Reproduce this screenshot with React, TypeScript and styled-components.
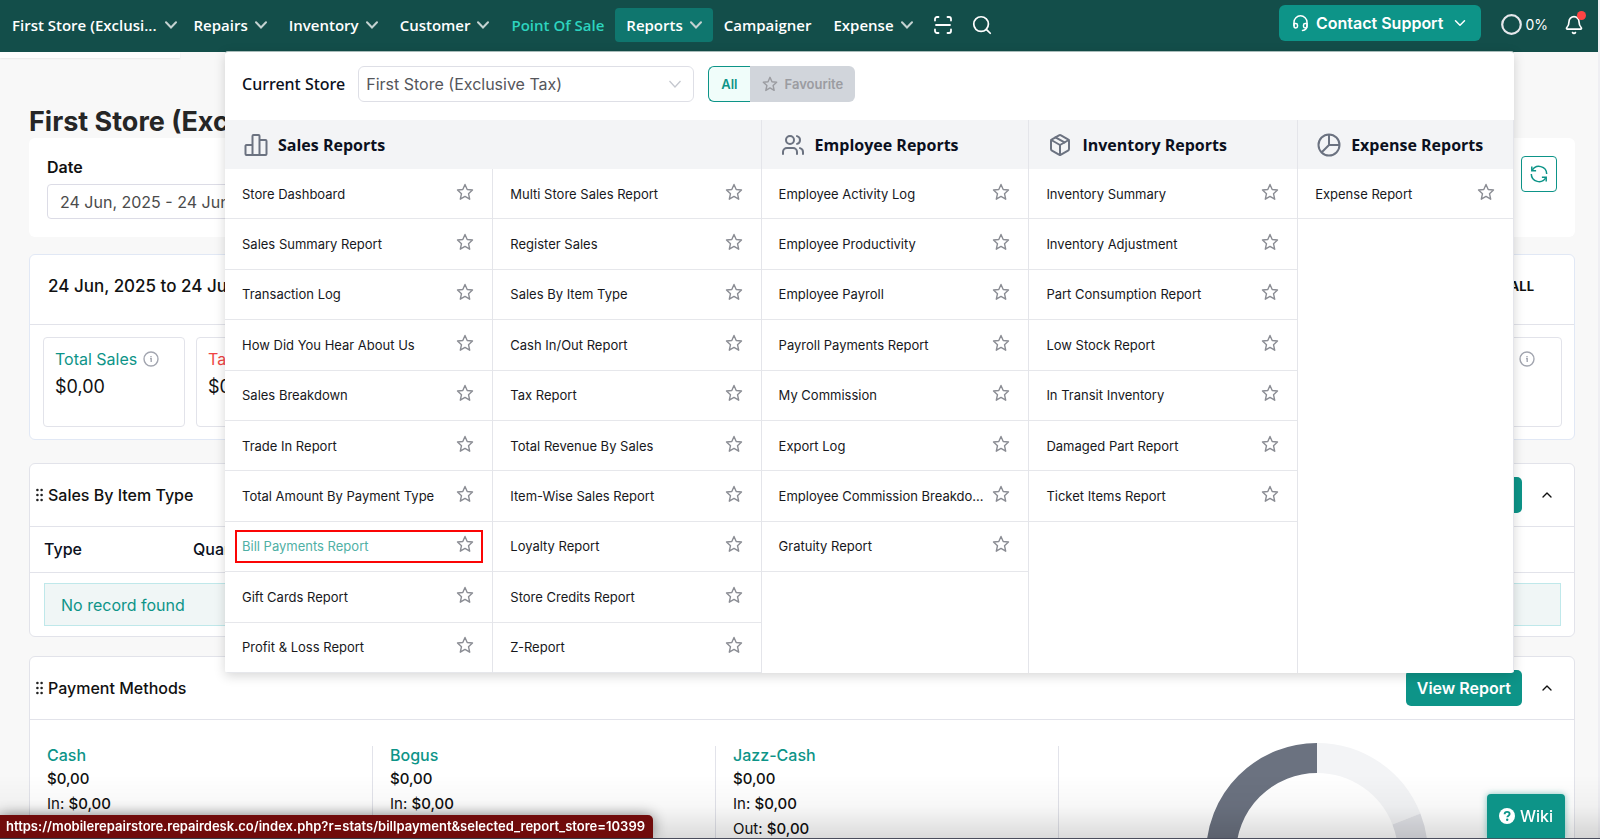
import React from "react";
import styled, { createGlobalStyle, css } from "styled-components";
import { ChevronDown, ChevronUp, Search, Bell, Users, Package } from "lucide-react";

const GlobalStyle = createGlobalStyle`
  *, *::before, *::after { box-sizing: border-box; }
  body {
    margin: 0;
    background: #f8f8f8;
    color: #111;
    font-family: Inter, "Liberation Sans", sans-serif;
    font-size: 16px;
  }
  button, input, select { font: inherit; color: inherit; }
  h1, h2, h3, p, ul, dl, dd { margin: 0; padding: 0; }
  ul { list-style: none; }
  a { color: inherit; text-decoration: none; }
`;

const Page = styled.div`
  height: 100vh;
  overflow: hidden;
  border-right: 2px solid #efeff3;
`;

/* ---------- top bar ---------- */

const TopBar = styled.header`
  position: relative;
  z-index: 5;
  display: flex;
  align-items: center;
  height: 52px;
  margin-right: -2px;
  padding: 0 16px 6px 12px;
  background: #134e4a;
  font-family: "Open Sans", "Noto Sans", sans-serif;
  font-weight: 600;
  font-size: 15px;
  color: #fff;
`;

const Nav = styled.nav`
  display: flex;
  align-items: center;
  padding-top: 4px;
`;

const barItem = css`
  display: flex;
  align-items: center;
  gap: 7px;
  height: 34px;
  padding: 0 11px;
  border: 0;
  border-radius: 4px;
  white-space: nowrap;
`;

const NavButton = styled.button<{ $active?: boolean; $first?: boolean }>`
  ${barItem}
  background: ${(p) => (p.$active ? "#0f766e" : "transparent")};
  ${(p) => p.$first && "padding: 0 6px 0 0; gap: 8px;"}
`;

const NavLink = styled.a<{ $accent?: boolean }>`
  ${barItem}
  color: ${(p) => (p.$accent ? "#2dd4bf" : "#fff")};
`;

const IconButton = styled.button`
  position: relative;
  display: flex;
  align-items: center;
  justify-content: center;
  padding: 0;
  border: 0;
  background: transparent;
  color: #fff;
`;

const NavIcons = styled.div`
  display: flex;
  gap: 19px;
  padding-left: 10px;
`;

const BarRight = styled.div`
  display: flex;
  align-items: center;
  margin-left: auto;
`;

const SupportButton = styled.button`
  display: flex;
  align-items: center;
  gap: 8px;
  height: 36px;
  margin-right: 20px;
  padding: 0 12px 0 14px;
  border: 0;
  border-radius: 6px;
  background: #0d9488;
  font-family: Inter, sans-serif;
  font-weight: 600;
  font-size: 16px;
`;

const Progress = styled.div`
  display: flex;
  align-items: center;
  gap: 3px;
  margin-right: 16px;
  padding-top: 2px;
  font-family: Inter, sans-serif;
  font-weight: 400;
  font-size: 14px;
`;

const BellButton = styled(IconButton)`
  padding-top: 4px;
`;

const Dot = styled.span`
  position: absolute;
  top: 0;
  right: -2px;
  width: 9px;
  height: 9px;
  border-radius: 50%;
  background: #ff4444;
`;

const StoreTab = styled.div`
  width: 180px;
  height: 6px;
  background: #fcfcfc;
  box-shadow: 0 1px 2px rgba(0, 0, 0, 0.07);
`;

/* ---------- dashboard ---------- */

const Main = styled.main`
  padding: 48px 23px 0 29px;
`;

const PageTitle = styled.h1`
  font-size: 27px;
  line-height: 32px;
  font-weight: 700;
  color: #262626;
`;

const FilterCard = styled.section`
  display: flex;
  justify-content: space-between;
  align-items: flex-start;
  height: 99px;
  padding: 18px 18px 0;
  border-radius: 6px;
  background: #fff;
`;

const Field = styled.label`
  display: flex;
  flex-direction: column;
  gap: 6px;
  font-size: 16px;
  line-height: 22px;
  font-weight: 600;
`;

const DateInput = styled.input`
  width: 260px;
  height: 35px;
  padding: 0 12px;
  border: 1px solid #dcdce6;
  border-radius: 4px;
  background: #fff;
  font-weight: 400;
  color: #4b4b4b;
`;

const RefreshButton = styled.button`
  display: flex;
  align-items: center;
  justify-content: center;
  width: 36px;
  height: 36px;
  padding: 0;
  border: 1px solid #0d9488;
  border-radius: 4px;
  background: #fff;
  color: #0d9488;
`;

const Card = styled.section<{ $gap: number; $tint?: boolean }>`
  margin-top: ${(p) => p.$gap}px;
  border: 1px solid ${(p) => (p.$tint ? "#e1e8f5" : "#e2e3ea")};
  border-radius: 6px;
  background: #fff;
`;

const CardHead = styled.div<{ $tall?: boolean }>`
  display: flex;
  align-items: center;
  height: ${(p) => (p.$tall ? 70 : 63)}px;
  padding: ${(p) => (p.$tall ? "0 40px 8px 18px" : "0 19px 0 6px")};
  border-bottom: 1px solid #e2e3ea;
`;

const CardTitle = styled.h2`
  margin-right: auto;
  font-size: 16px;
  line-height: 22px;
  font-weight: 500;
`;

const RangeTitle = styled(CardTitle)`
  font-size: 17px;
`;

const ViewAll = styled.a`
  font-size: 13px;
  font-weight: 700;
`;

const DragDots = styled.svg`
  margin-right: 5px;
`;

const ViewReport = styled.a`
  display: flex;
  align-items: center;
  height: 36px;
  margin-right: 17px;
  padding: 0 11px;
  border-radius: 5px;
  background: #0d9488;
  color: #fff;
  font-weight: 600;
`;

const Collapse = styled(IconButton)`
  color: #111;
`;

const Tiles = styled.div`
  display: grid;
  grid-template-columns: repeat(10, 1fr);
  gap: 11px;
  padding: 12px 12px 12px 13px;
`;

const Tile = styled.div`
  height: 90px;
  padding: 10px 11px;
  border: 1px solid #e2e3ea;
  border-radius: 4px;
  overflow: hidden;
`;

const TileLabel = styled.h3<{ $color: string }>`
  display: flex;
  align-items: center;
  gap: 6px;
  height: 22px;
  font-size: 16px;
  font-weight: 400;
  color: ${(p) => p.$color};
`;

const IconRight = styled.span`
  display: flex;
  margin-left: auto;
  padding-right: 15px;
`;

const TileValue = styled.p`
  font-size: 18px;
  line-height: 34px;
`;

const Table = styled.table`
  width: 100%;
  border-collapse: collapse;
  th {
    height: 45px;
    padding: 0 14px;
    border-bottom: 1px solid #e2e3ea;
    text-align: left;
    font-weight: 500;
    color: #0b1020;
  }
  th:first-child { width: 149px; }
  td { padding: 10px 13px 10px 14px; }
`;

const Empty = styled.div`
  height: 43px;
  padding: 0 16px;
  border: 1px solid #bfe8ea;
  background: #f0f6f6;
  color: #0d9488;
  line-height: 42px;
`;

const Methods = styled.div`
  display: flex;
  padding: 26px 0 0 17px;
`;

const Method = styled.div`
  flex: 0 0 343px;
  height: 92px;
  border-right: 1px solid #e2e3ea;
  & + & { padding-left: 17px; }
  &:first-child { flex-basis: 326px; }
`;

const MethodName = styled.h3`
  margin-bottom: 2px;
  font-size: 16px;
  line-height: 18px;
  font-weight: 500;
  color: #0d9488;
`;

const MethodLine = styled.p`
  font-size: 15px;
  line-height: 25px;
  span { font-weight: 500; }
`;

const MethodTotal = styled(MethodLine)`
  font-weight: 500;
`;

const Chart = styled.svg`
  flex: none;
  margin: -3px 146px 0 auto;
`;

/* ---------- reports menu ---------- */

const Menu = styled.section`
  position: absolute;
  z-index: 10;
  top: 51px;
  left: 225px;
  right: 86px;
  border-radius: 3px;
  background: #fff;
  box-shadow: 0 3px 12px rgba(0, 0, 0, 0.16);
  overflow: hidden;
  border-top: 1px solid #a9bcba;
`;

const MenuTop = styled.div`
  display: flex;
  align-items: center;
  height: 68px;
  padding: 0 17px 4px;
`;

const StoreLabel = styled.label`
  margin-right: 13px;
  font-family: "Noto Sans", sans-serif;
  font-size: 16px;
  font-weight: 500;
  color: #0b1020;
`;

const SelectBox = styled.div`
  display: flex;
  align-items: center;
  width: 336px;
  height: 36px;
  margin-right: 14px;
  padding-right: 12px;
  border: 1px solid #dedfe6;
  border-radius: 6px;
  color: #c5c8cf;
`;

const StoreSelect = styled.select`
  flex: 1;
  height: 34px;
  padding: 0 7px;
  border: 0;
  background: transparent;
  appearance: none;
  color: #55565b;
`;

const FilterButton = styled.button<{ $on?: boolean }>`
  display: flex;
  align-items: center;
  justify-content: center;
  gap: 7px;
  height: 36px;
  font-size: 13px;
  padding: 0 12px;
  font-weight: 600;
  ${(p) =>
    p.$on
      ? "border: 1px solid #0d9488; border-right: 0; border-radius: 6px 0 0 6px; background: #f0fdfa; color: #0d9488;"
      : "border: 0; border-radius: 0 6px 6px 0; background: #d1d5db; color: #9b9ca1;"}
`;

const Groups = styled.div`
  display: grid;
  grid-template-columns: minmax(0, 536fr) minmax(0, 268fr) minmax(0, 269fr) minmax(0, 216fr);
  border-right: 1px solid #e4e5ea;
`;

const Group = styled.div`
  display: flex;
  flex-direction: column;
  & + & { border-left: 1px solid #e4e5ea; }
`;

const GroupHead = styled.h2`
  display: flex;
  align-items: center;
  gap: 10px;
  height: 49px;
  padding-left: 19px;
  background: #f3f4f6;
  font-family: "Open Sans", "Noto Sans", sans-serif;
  font-size: 16px;
  font-weight: 700;
  color: #0b1020;
  white-space: nowrap;
  svg { color: #6b7280; }
`;

const Columns = styled.div`
  flex: 1;
  display: flex;
`;

const Reports = styled.ul`
  flex: 1;
  min-width: 0;
  display: grid;
  grid-template-rows: repeat(10, 1fr);
  min-height: 504px;
  & + & { border-left: 1px solid #e4e5ea; }
`;

const ReportRow = styled.li<{ $marked?: boolean }>`
  position: relative;
  display: flex;
  align-items: center;
  justify-content: space-between;
  padding: 0 18px 0 17px;
  border-bottom: 1px solid #e6e7eb;
  font-size: 13px;
  color: ${(p) => (p.$marked ? "#4fb0a5" : "#17181c")};
  a { white-space: nowrap; }
`;

const StarButton = styled(IconButton)`
  flex: none;
  padding-bottom: 4px;
  color: #8b8d94;
`;

const Highlight = styled.span`
  position: absolute;
  inset: 8px 9px 8px 10px;
  border: 2px solid #fb0505;
  pointer-events: none;
`;

/* ---------- bottom overlays ---------- */

const BottomShade = styled.div`
  position: fixed;
  inset: auto 0 0 0;
  z-index: 3;
  height: 64px;
  border-bottom: 1px solid #4a4d5c;
  background: linear-gradient(transparent, rgba(0, 0, 0, 0.03) 50%, rgba(0, 0, 0, 0.14));
  pointer-events: none;
`;

const WikiButton = styled.button`
  position: fixed;
  z-index: 4;
  right: 35px;
  bottom: 1px;
  display: flex;
  align-items: center;
  justify-content: center;
  gap: 5px;
  width: 78px;
  height: 44px;
  padding: 0;
  border: 0;
  border-radius: 4px 4px 0 0;
  background: #0d9488;
  color: #fff;
  font-weight: 500;
  box-shadow: 0 0 6px rgba(13, 148, 136, 0.5);
`;

const StatusUrl = styled.div`
  position: fixed;
  z-index: 12;
  left: 0;
  bottom: 1px;
  height: 23px;
  padding: 0 8px 0 6px;
  border-radius: 0 5px 0 0;
  background: #700b0b;
  color: #fff;
  font-size: 13px;
  font-weight: 600;
  line-height: 23px;
  box-shadow: 0 0 14px rgba(0, 0, 0, 0.45);
`;

/* ---------- icons ---------- */

const Chevron = () => (
  <svg width="12" height="8" viewBox="0 0 12 8" fill="none" stroke="#c3d2d1" strokeWidth="2" strokeLinecap="round">
    <path d="M1 1.200L6 6.500L11 1.200" />
  </svg>
);

const SelectChevron = () => (
  <svg width="12" height="8" viewBox="0 0 12 8" fill="none" stroke="currentColor" strokeWidth="1.300">
    <path d="M0.500 1L6 7L11.500 1" />
  </svg>
);

const StarIcon = ({ size = 18, width = 1.4 }: { size?: number; width?: number }) => (
  <svg width={size} height={size} viewBox="0 0 18 18" fill="none" stroke="currentColor" strokeWidth={width} strokeLinejoin="round">
    <path d="M9 1.500L11.200 6.500L16.500 7L12.500 10.700L13.700 16.200L9 13.400L4.300 16.200L5.500 10.700L1.500 7L6.800 6.500Z" />
  </svg>
);

const HeadsetIcon = () => (
  <svg width="15" height="17" viewBox="0 0 15 17" fill="none" stroke="currentColor" strokeWidth="1.500" strokeLinecap="round" strokeLinejoin="round">
    <path d="M1 10.500V7.300a6.500 6.500 0 0 1 13 0v3.500c0 2.600-1.600 4.400-4.500 4.700" />
    <path d="M1 8.500h1.800c1 0 1.700.7 1.700 1.700v1c0 1-.7 1.700-1.700 1.700S1 12.200 1 11zM14 8.500h-1.800c-1 0-1.700.7-1.700 1.700v1c0 1 .7 1.700 1.700 1.700S14 12.200 14 11z" />
  </svg>
);

const ScanIcon = () => (
  <svg width="18" height="18" viewBox="0 0 18 18" fill="none" stroke="#fff" strokeWidth="1.800" strokeLinecap="round">
    <path d="M1 4.500V3a2 2 0 0 1 2-2h1.500M13.500 1H15a2 2 0 0 1 2 2v1.500M17 13.500V15a2 2 0 0 1-2 2h-1.500M4.500 17H3a2 2 0 0 1-2-2v-1.500M2 9h14" />
  </svg>
);

const InfoIcon = () => (
  <svg width="16" height="16" viewBox="0 0 16 16" fill="none" stroke="#a3a6b0" strokeWidth="1.400">
    <circle cx="8" cy="8" r="7" />
    <path d="M7 7.500H8.200V11M8 5v1" />
  </svg>
);

const RefreshIcon = () => (
  <svg width="18" height="18" viewBox="0 0 18 18" fill="none" stroke="currentColor" strokeWidth="1.500">
    <path d="M2.200 5.500A7.700 7.700 0 0 1 16.700 9M15.800 12.500A7.700 7.700 0 0 1 1.300 9" />
    <path d="M1.800 1.500v4.300h4.300M16.200 16.500v-4.300h-4.300" />
  </svg>
);

const SalesIcon = () => (
  <svg width="24" height="22" viewBox="0 0 24 22" fill="none" stroke="currentColor" strokeWidth="2" strokeLinejoin="round">
    <path d="M1.500 12a1 1 0 0 1 1-1h6v10h-6a1 1 0 0 1-1-1zM8.500 2a1 1 0 0 1 1-1h5a1 1 0 0 1 1 1v19h-7zM15.500 6h6a1 1 0 0 1 1 1v13a1 1 0 0 1-1 1h-6z" />
  </svg>
);

const PieIcon = () => (
  <svg width="24" height="24" viewBox="0 0 24 24" fill="none" stroke="currentColor" strokeWidth="2">
    <circle cx="12" cy="12" r="10.500" />
    <path d="M12 1.500V12h10.500M12 12l-7.500 7.500" />
  </svg>
);

const Dots = () => (
  <DragDots width="7" height="14" viewBox="0 0 7 14" fill="#222" aria-hidden="true">
    {[0, 5, 10].map((y) => (
      <React.Fragment key={y}>
        <circle cx="1.400" cy={y + 2} r="1.300" />
        <circle cx="5.600" cy={y + 2} r="1.300" />
      </React.Fragment>
    ))}
  </DragDots>
);

const HelpIcon = () => (
  <svg width="16" height="16" viewBox="0 0 16 16">
    <circle cx="8" cy="8" r="8" fill="#fff" />
    <path d="M5.600 6.200C5.700 4.700 6.700 3.900 8.100 3.900s2.500.8 2.500 2.100c0 1.700-2.300 1.700-2.300 3.300" fill="none" stroke="#0d9488" strokeWidth="1.900" />
    <circle cx="8.200" cy="11.700" r="1.200" fill="#0d9488" />
  </svg>
);

/* ---------- data ---------- */

const salesLeft = [
  "Store Dashboard", "Sales Summary Report", "Transaction Log", "How Did You Hear About Us", "Sales Breakdown",
  "Trade In Report", "Total Amount By Payment Type", "Bill Payments Report", "Gift Cards Report", "Profit & Loss Report",
];
const salesRight = [
  "Multi Store Sales Report", "Register Sales", "Sales By Item Type", "Cash In/Out Report", "Tax Report",
  "Total Revenue By Sales", "Item-Wise Sales Report", "Loyalty Report", "Store Credits Report", "Z-Report",
];
const employee = [
  "Employee Activity Log", "Employee Productivity", "Employee Payroll", "Payroll Payments Report", "My Commission",
  "Export Log", "Employee Commission Breakdo...", "Gratuity Report",
];
const inventory = [
  "Inventory Summary", "Inventory Adjustment", "Part Consumption Report", "Low Stock Report", "In Transit Inventory",
  "Damaged Part Report", "Ticket Items Report",
];

const groups = [
  { title: "Sales Reports", icon: <SalesIcon />, lists: [salesLeft, salesRight] },
  { title: "Employee Reports", icon: <Users size={24} />, lists: [employee] },
  { title: "Inventory Reports", icon: <Package size={24} />, lists: [inventory] },
  { title: "Expense Reports", icon: <PieIcon />, lists: [["Expense Report"]] },
];

const methods = [
  { name: "Cash", total: "$0,00", incoming: "$0,00" },
  { name: "Bogus", total: "$0,00", incoming: "$0,00" },
  { name: "Jazz-Cash", total: "$0,00", incoming: "$0,00", outgoing: "$0,00" },
];

const ReportList = ({ items }: { items: string[] }) => (
  <Reports>
    {items.map((name) => {
      const marked = name === "Bill Payments Report";
      return (
        <ReportRow key={name} $marked={marked}>
          <a href="#report">{name}</a>
          <StarButton aria-label={`Favourite ${name}`}>
            <StarIcon />
          </StarButton>
          {marked && <Highlight />}
        </ReportRow>
      );
    })}
  </Reports>
);

const ReportsMenu = () => (
  <Menu>
    <MenuTop>
      <StoreLabel htmlFor="store">Current Store</StoreLabel>
      <SelectBox>
        <StoreSelect id="store">
          <option>First Store (Exclusive Tax)</option>
        </StoreSelect>
        <SelectChevron />
      </SelectBox>
      <FilterButton $on>All</FilterButton>
      <FilterButton>
        <StarIcon size={16} width={1.6} />
        Favourite
      </FilterButton>
    </MenuTop>
    <Groups>
      {groups.map((g) => (
        <Group key={g.title}>
          <GroupHead>
            {g.icon}
            {g.title}
          </GroupHead>
          <Columns>
            {g.lists.map((items) => (
              <ReportList key={items[0]} items={items} />
            ))}
          </Columns>
        </Group>
      ))}
    </Groups>
  </Menu>
);

const SectionHead = ({ title }: { title: string }) => (
  <CardHead>
    <Dots />
    <CardTitle>{title}</CardTitle>
    <ViewReport href="#view">View Report</ViewReport>
    <Collapse aria-label={`Collapse ${title}`}>
      <ChevronUp size={16} />
    </Collapse>
  </CardHead>
);

export default function App() {
  return (
    <Page>
      <GlobalStyle />
      <TopBar>
        <Nav>
          <NavButton $first>First Store (Exclusi... <Chevron /></NavButton>
          <NavButton>Repairs <Chevron /></NavButton>
          <NavButton>Inventory <Chevron /></NavButton>
          <NavButton>Customer <Chevron /></NavButton>
          <NavLink href="#pos" $accent>Point Of Sale</NavLink>
          <NavButton $active>Reports <Chevron /></NavButton>
          <NavLink href="#campaigner">Campaigner</NavLink>
          <NavButton>Expense <Chevron /></NavButton>
          <NavIcons>
            <IconButton aria-label="Scan"><ScanIcon /></IconButton>
            <IconButton aria-label="Search"><Search size={22} strokeWidth={1.9} /></IconButton>
          </NavIcons>
        </Nav>
        <BarRight>
          <SupportButton>
            <HeadsetIcon />
            Contact Support
            <ChevronDown size={18} />
          </SupportButton>
          <Progress>
            <svg width="21" height="21" viewBox="0 0 21 21">
              <circle cx="10.500" cy="10.500" r="9.300" fill="none" stroke="#e5e7eb" strokeWidth="2.200" />
            </svg>
            0%
          </Progress>
          <BellButton aria-label="Notifications">
            <Bell size={20} />
            <Dot />
          </BellButton>
        </BarRight>
      </TopBar>
      <ReportsMenu />
      <StoreTab />
      <Main>
        <PageTitle>First Store (Exclusive Tax)</PageTitle>
        <FilterCard>
          <Field>
            Date
            <DateInput readOnly value="24 Jun, 2025 - 24 Jun, 2025" />
          </Field>
          <RefreshButton aria-label="Refresh"><RefreshIcon /></RefreshButton>
        </FilterCard>

        <Card $gap={17} $tint>
          <CardHead $tall>
            <RangeTitle>24 Jun, 2025 to 24 Jun, 2025</RangeTitle>
            <ViewAll href="#all">ALL</ViewAll>
          </CardHead>
          <Tiles>
            <Tile>
              <TileLabel $color="#0d9488">Total Sales <InfoIcon /></TileLabel>
              <TileValue>$0,00</TileValue>
            </Tile>
            <Tile>
              <TileLabel $color="#ef4444">Tax</TileLabel>
              <TileValue>$0,00</TileValue>
            </Tile>
            {[3, 4, 5, 6, 7, 8, 9].map((n) => <Tile key={n} />)}
            <Tile>
              <TileLabel $color="#0d9488"><IconRight><InfoIcon /></IconRight></TileLabel>
            </Tile>
          </Tiles>
        </Card>

        <Card $gap={23}>
          <SectionHead title="Sales By Item Type" />
          <Table>
            <thead>
              <tr><th>Type</th><th>Quantity</th></tr>
            </thead>
            <tbody>
              <tr><td colSpan={2}><Empty>No record found</Empty></td></tr>
            </tbody>
          </Table>
        </Card>

        <Card $gap={19}>
          <SectionHead title="Payment Methods" />
          <Methods>
            {methods.map((m) => (
              <Method key={m.name}>
                <MethodName>{m.name}</MethodName>
                <MethodTotal>{m.total}</MethodTotal>
                <MethodLine>In: <span>{m.incoming}</span></MethodLine>
                {m.outgoing && <MethodLine>Out: <span>{m.outgoing}</span></MethodLine>}
              </Method>
            ))}
            <Chart width="222" height="222" viewBox="-111 -111 222 222" fill="none" strokeWidth="30">
              <path d="M0 -96A96 96 0 0 1 89.400 -35" stroke="#f3f4f6" />
              <path d="M89.400 -35A96 96 0 0 1 0 96" stroke="#e2e3e8" />
              <path d="M0 96A96 96 0 0 1 0 -96" stroke="#6b7280" />
            </Chart>
          </Methods>
        </Card>
      </Main>
      <BottomShade />
      <WikiButton><HelpIcon />Wiki</WikiButton>
      <StatusUrl>https://mobilerepairstore.repairdesk.co/index.php?r=stats/billpayment&amp;selected_report_store=10399</StatusUrl>
    </Page>
  );
}
